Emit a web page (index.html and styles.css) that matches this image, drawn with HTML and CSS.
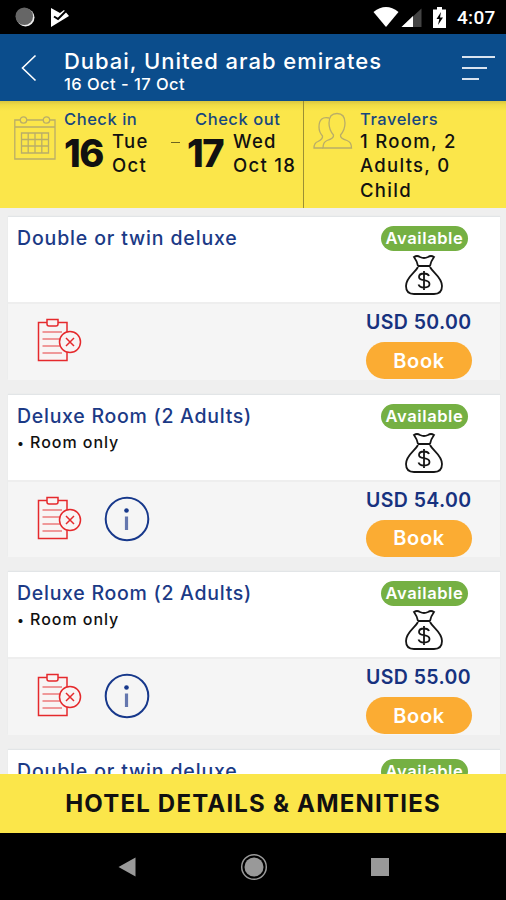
FILE: index.html
```
<!DOCTYPE html>
<html lang="en">
<head>
    <meta charset="UTF-8">
    <meta name="viewport" content="width=device-width, initial-scale=1.0">
    <title>Hotel rooms</title>
    <link rel="stylesheet" href="styles.css">
</head>
<body>
    <!-- Shared icons -->
    <svg class="sprite" width="0" height="0">
        <symbol id="bag" viewBox="0 0 38 40">
            <path d="M13 11 Q12 6 9 2 Q12 0 15 2 Q19 4 23 2 Q26 0 29 2 Q26 6 25 11 M13 11 H25 M13 12 C10 18 1 22 1 31 Q1 39 9 39 H29 Q37 39 37 31 C37 22 28 18 25 12" />
            <path d="M24 21 Q23 18.5 19 18.5 Q14 18.5 14 22 Q14 24.5 19 25.2 Q24.5 26 24.5 29 Q24.5 32.5 19 32.5 Q14.5 32.5 13.5 29.5 M19 16 V35" />
        </symbol>
        <symbol id="policy" viewBox="0 0 45 44">
            <path d="M10 4.500 H1.500 V42.500 H30 V34 M21 4.500 H30 V14" />
            <path d="M10 1.500 H21 V6 Q21 8 19 8 H12 Q10 8 10 6 Z" />
            <path d="M5.500 14 H25 M5.500 21 H23 M5.500 28 H23 M5.500 35 H25" stroke-opacity="0.6" />
            <circle cx="33" cy="24" r="10.500" />
            <path d="M29 20 L37 28 M37 20 L29 28" />
        </symbol>
        <symbol id="info" viewBox="0 0 46 46">
            <circle cx="23" cy="23" r="21.300" />
            <circle cx="22.500" cy="14.500" r="2.300" fill="#17388b" stroke="none" />
            <path d="M22.500 20.500 V34" stroke="#6577ae" stroke-width="3.200" />
        </symbol>
    </svg>

    <div class="status-bar">
        <svg width="60" height="34" viewBox="0 0 60 34">
            <circle cx="16.500" cy="17.500" r="9" fill="#eee" />
            <circle cx="15.300" cy="16.300" r="8.800" fill="#666" />
            <path d="M42 8 L51 13 L55 10 L60 16 L42 27 Z" fill="#fff" />
            <path d="M45 16.500 L49 19 L57 11" fill="none" stroke="#000" stroke-width="2" />
        </svg>
        <div class="status-right">
            <svg width="76" height="34" viewBox="0 0 76 34">
                <path d="M0.500 12 Q13 2 25.500 12 L13 27 Z" fill="#fff" />
                <path d="M48.500 8.500 V27 H28.500 Z" fill="#444" />
                <path d="M40 16 V27 H28.500 Z" fill="#fff" />
                <path d="M64 7 H69 V9.500 H73 V28 H60 V9.500 H64 Z" fill="#fff" />
                <path d="M68 12 L63.500 19 H66.300 L65 25 L70 17.500 H67 Z" fill="#000" />
            </svg>
            <span class="clock">4:07</span>
        </div>
    </div>

    <header class="header">
        <svg class="back" width="16" height="28" viewBox="0 0 16 28">
            <path d="M14.500 1.500 L1.500 14 L14.500 26.500" />
        </svg>
        <div class="destination">
            <h1>Dubai, United arab emirates</h1>
            <p>16 Oct - 17 Oct</p>
        </div>
        <div class="menu">
            <span></span>
            <span></span>
            <span></span>
        </div>
    </header>

    <section class="summary">
        <div class="dates">
            <svg class="line-icon" width="42" height="46" viewBox="0 0 42 46">
                <path d="M6 5 H0.800 V44 H41 V5 H36 M13 5 H29 M0.800 12 H41" />
                <circle cx="9.500" cy="5" r="3.200" />
                <circle cx="32.500" cy="5" r="3.200" />
                <path d="M7.500 18 H34.500 V38 H7.500 Z M7.500 24.500 H34.500 M7.500 31 H34.500 M14.200 18 V38 M21 18 V38 M27.800 18 V38" />
            </svg>
            <div class="check-in">
                <h2>Check in</h2>
                <div class="day">
                    <b>16</b>
                    <p>Tue<br>Oct</p>
                </div>
            </div>
            <span class="dash"></span>
            <div class="check-out">
                <h2>Check out</h2>
                <div class="day">
                    <b>17</b>
                    <p>Wed<br>Oct 18</p>
                </div>
            </div>
        </div>
        <div class="travelers">
            <svg class="line-icon" width="40" height="38" viewBox="0 0 40 38">
                <path d="M10 36 Q10 30 14 28.500 Q21 26.500 20.500 23 Q16 18 16 11 Q16 1.500 24 1.500 Q32 1.500 32 11 Q32 18 27.500 23 Q27 26.500 34 28.500 Q38.500 30 38.500 36 Z" />
                <path d="M16 6 Q6 4 6 15 Q6 20 9.500 24 Q10 27 5 29.500 Q1 31 1 36 H10" />
            </svg>
            <div>
                <h2>Travelers</h2>
                <p>1 Room, 2<br>Adults, 0<br>Child</p>
            </div>
        </div>
    </section>

    <main class="rooms">
        <article class="card">
            <div class="card-top">
                <div>
                    <h3 class="wide">Double or twin deluxe</h3>
                </div>
                <div class="availability">
                    <span class="badge">Available</span>
                    <svg class="bag"><use href="#bag" /></svg>
                </div>
            </div>
            <div class="card-bottom">
                <svg class="policy"><use href="#policy" /></svg>
                <div class="booking">
                    <strong>USD 50.00</strong>
                    <button>Book</button>
                </div>
            </div>
        </article>

        <article class="card">
            <div class="card-top">
                <div>
                    <h3>Deluxe Room (2 Adults)</h3>
                    <p class="board"><span>•</span> Room only</p>
                </div>
                <div class="availability">
                    <span class="badge">Available</span>
                    <svg class="bag"><use href="#bag" /></svg>
                </div>
            </div>
            <div class="card-bottom">
                <svg class="policy"><use href="#policy" /></svg>
                <svg class="info"><use href="#info" /></svg>
                <div class="booking">
                    <strong>USD 54.00</strong>
                    <button>Book</button>
                </div>
            </div>
        </article>

        <article class="card">
            <div class="card-top">
                <div>
                    <h3>Deluxe Room (2 Adults)</h3>
                    <p class="board"><span>•</span> Room only</p>
                </div>
                <div class="availability">
                    <span class="badge">Available</span>
                    <svg class="bag"><use href="#bag" /></svg>
                </div>
            </div>
            <div class="card-bottom">
                <svg class="policy"><use href="#policy" /></svg>
                <svg class="info"><use href="#info" /></svg>
                <div class="booking">
                    <strong>USD 55.00</strong>
                    <button>Book</button>
                </div>
            </div>
        </article>

        <article class="card">
            <div class="card-top">
                <div>
                    <h3 class="wide">Double or twin deluxe</h3>
                </div>
                <div class="availability">
                    <span class="badge">Available</span>
                </div>
            </div>
        </article>
    </main>

    <a class="details">HOTEL DETAILS &amp; AMENITIES</a>

    <nav class="nav-bar">
        <svg width="18" height="20" viewBox="0 0 18 20"><path d="M17.500 0.500 V19.500 L0.500 10 Z" fill="#999" /></svg>
        <svg width="28" height="28" viewBox="0 0 28 28">
            <circle cx="14" cy="14" r="12.300" fill="none" stroke="#999" stroke-width="1.500" />
            <circle cx="14" cy="14" r="9.500" fill="#999" />
        </svg>
        <svg width="18" height="18" viewBox="0 0 18 18"><path d="M0 0 H18 V18 H0 Z" fill="#999" /></svg>
    </nav>
</body>
</html>
```
FILE: styles.css
```
* {
    box-sizing: border-box;
}
body {
    margin: 0;
    height: 900px;
    display: flex;
    flex-direction: column;
    overflow: hidden;
    font-family: Inter, "Open Sans", sans-serif;
    background-color: #efefef;
    color: #111;
}
h1, h2, h3, p {
    margin: 0;
    font-weight: 500;
    white-space: nowrap;
}
svg {
    display: block;
    flex-shrink: 0;
}
.sprite {
    position: absolute;
}

/* Status bar */
.status-bar {
    height: 34px;
    flex-shrink: 0;
    display: flex;
    justify-content: space-between;
    padding: 0 11px 0 9px;
    background-color: #000;
}
.status-right {
    display: flex;
    gap: 8px;
}
.clock {
    width: 38px;
    color: #fff;
    font-family: Roboto, sans-serif;
    font-size: 19px;
    font-weight: 500;
    line-height: 36px;
    letter-spacing: 0.3px;
}

/* Header */
.header {
    height: 67px;
    flex-shrink: 0;
    display: flex;
    padding-left: 21px;
    background-color: #0b4d8c;
    color: #fff;
}
.back {
    margin-top: 20px;
    fill: none;
    stroke: #fff;
    stroke-width: 1.6;
}
.destination {
    width: 398px;
    padding: 13px 0 0 27px;
}
.destination h1 {
    font-size: 22px;
    line-height: 28px;
    letter-spacing: 0.97px;
}
.destination p {
    font-size: 16.5px;
    line-height: 19px;
    letter-spacing: 0.45px;
}
.menu {
    padding-top: 22px;
    margin-left: 27px;
}
.menu span {
    display: block;
    width: 33px;
    height: 2px;
    margin-bottom: 9px;
    background-color: #d9e3ef;
}
.menu span:nth-child(2) {
    width: 25px;
}
.menu span:nth-child(3) {
    width: 17px;
}

/* Stay summary */
.summary {
    height: 107px;
    flex-shrink: 0;
    display: flex;
    background: linear-gradient(#d9c63f, #efdc45 4px, #fbe64a 10px);
}
.summary h2 {
    color: #17477f;
    font-size: 16.5px;
    line-height: 20px;
    letter-spacing: 0.55px;
}
.summary p {
    font-size: 18.5px;
    line-height: 24.3px;
    letter-spacing: 1.3px;
    color: #111;
}
.line-icon {
    fill: none;
    stroke: #b9ad68;
    stroke-width: 1.3;
}
.dates {
    width: 304px;
    display: flex;
    padding: 8px 0 0 14px;
    border-right: 1px solid #9b8f34;
}
.dates .line-icon {
    margin-top: 6px;
}
.check-in {
    width: 115px;
    padding-left: 8px;
}
.day {
    display: flex;
}
.day b {
    width: 48px;
    font-size: 38px;
    font-weight: 800;
    line-height: 48px;
    letter-spacing: -1.5px;
}
.dash {
    width: 9px;
    height: 1px;
    margin-top: 33px;
    background-color: #6d6420;
}
.check-out {
    padding-left: 7px;
}
.check-out .day b {
    width: 46px;
}
.check-out h2 {
    padding-left: 8px;
}
.travelers {
    display: flex;
    padding: 8px 0 0 9px;
}
.travelers .line-icon {
    margin: 3px 7px 0 0;
}

/* Room list */
.rooms {
    flex: 1;
    min-height: 0;
    overflow: hidden;
    padding: 9px 6px 0 8px;
}
.card {
    height: 162.6px;
    margin-bottom: 15px;
    background-color: #f5f5f5;
    box-shadow: 0 -1px 1px #e2e5e7;
}
.card-top {
    height: 85px;
    display: flex;
    justify-content: space-between;
    padding: 9px 32px 0 9px;
    background-color: #fff;
}
.card-top h3 {
    color: #1b3a86;
    font-size: 19.5px;
    line-height: 24px;
    letter-spacing: 0.73px;
}
.card-top .wide {
    letter-spacing: 0.85px;
}
.board {
    padding-top: 3px;
    font-size: 16px;
    line-height: 22px;
    letter-spacing: 0.95px;
}
.board span {
    font-size: 13px;
}
.availability {
    width: 87px;
}
.badge {
    display: block;
    height: 25px;
    border-radius: 13px;
    background-color: #75b043;
    color: #fff;
    font-size: 16.5px;
    font-weight: 600;
    line-height: 25px;
    letter-spacing: 0.6px;
    text-align: center;
}
.bag {
    width: 38px;
    height: 40px;
    margin: 4px 0 0 24px;
    fill: none;
    stroke: #151515;
    stroke-width: 1.8;
}
.card-bottom {
    height: 77px;
    display: flex;
    padding: 0 28px 0 29px;
    border-top: 2px solid #eee;
}
.policy {
    width: 45px;
    height: 44px;
    margin-top: 14px;
    fill: #f8f4f4;
    stroke: #e5292c;
    stroke-width: 1.5;
}
.info {
    width: 46px;
    height: 46px;
    margin: 14px 0 0 22px;
    fill: none;
    stroke: #17388b;
    stroke-width: 2;
}
.booking {
    width: 106px;
    margin-left: auto;
    padding-top: 6px;
}
.booking strong {
    display: block;
    color: #17327f;
    font-size: 19.5px;
    font-weight: 600;
    line-height: 24px;
    letter-spacing: 0.4px;
    white-space: nowrap;
}
.booking button {
    display: block;
    width: 106px;
    height: 37px;
    margin-top: 8px;
    padding: 0;
    border: none;
    border-radius: 19px;
    background-color: #fbac33;
    color: #fff;
    font: 600 20px Inter, sans-serif;
    letter-spacing: 0.7px;
}

/* Bottom bars */
.details {
    height: 59px;
    flex-shrink: 0;
    background-color: #fbe64a;
    color: #111;
    font-size: 24px;
    font-weight: 700;
    line-height: 59px;
    letter-spacing: 1.2px;
    text-align: center;
    white-space: nowrap;
}
.nav-bar {
    height: 67px;
    flex-shrink: 0;
    display: flex;
    justify-content: space-between;
    align-items: center;
    padding: 0 117px 0 118px;
    background-color: #000;
}
```
